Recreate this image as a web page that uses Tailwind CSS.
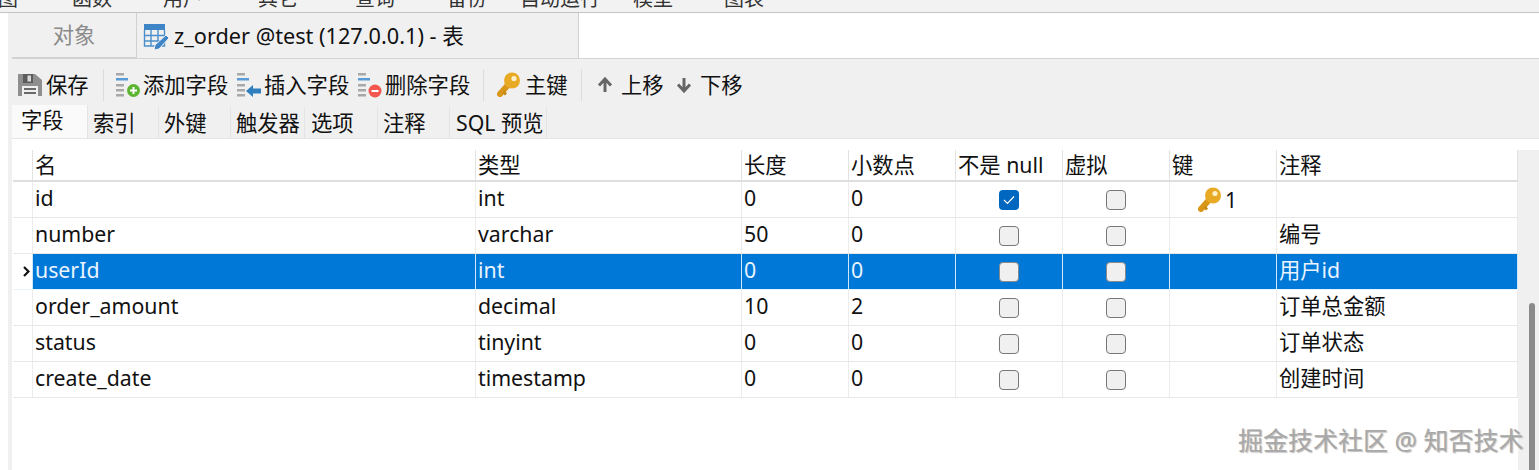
<!DOCTYPE html>
<html lang="zh-CN">
<head>
  <meta charset="UTF-8">
  <title>z_order @test (127.0.0.1) - 表</title>
  <script src="https://cdn.jsdelivr.net/npm/@tailwindcss/browser@4"></script>
</head>
<body class="relative w-[1539px] h-[470px] overflow-hidden bg-white text-[21.3px] text-[#111] font-['Noto_Sans','Noto_Sans_CJK_SC',sans-serif]">

  <!-- cut off menu bar -->
  <div class="h-[13px] overflow-hidden bg-[#f2f2f2] border-b border-[#c4c4c4] flex text-[20px] leading-[20px] text-[#333]">
    <div class="flex -mt-[11px] -ml-[2px]">
      <span class="w-[74px]">图</span>
      <span class="w-[91px]">函数</span>
      <span class="w-[95px]">用户</span>
      <span class="w-[97px]">其它</span>
      <span class="w-[92px]">查询</span>
      <span class="w-[73px]">备份</span>
      <span class="w-[113px]">自动运行</span>
      <span class="w-[91px]">模型</span>
      <span>图表</span>
    </div>
  </div>

  <div class="flex flex-col h-[457px] overflow-hidden pl-[4px] border-l-[8px] border-white bg-[#f0f0f0]">

    <!-- document tabs -->
    <div class="flex shrink-0 h-[46px] bg-white border-b border-[#d4d4d4]">
      <div class="w-[125px] flex items-center justify-center text-[#8a8a8a] bg-[#f0f0f0] border-r border-b border-[#d0d0d0]">对象</div>
      <div class="w-[442px] flex items-center pl-[6px] pt-[1px] gap-[5px] bg-[#f0f0f0] border-r border-[#d0d0d0] text-[21.7px]">
        <svg width="26" height="28" viewBox="0 0 26 28" class="shrink-0">
          <rect x="1" y="2" width="21" height="6" fill="#3d85c6"/>
          <path d="M1.500 8v16h20V8M8 8v16M15 8v16M1.500 13.500h20M1.500 19h20" fill="none" stroke="#4a8fcb" stroke-width="1.400"/>
          <path d="M12 23l11-10 3 3-10 11-5 1z" fill="#3d85c6" stroke="#f0f0f0" stroke-width="1"/>
        </svg>
        <span class="whitespace-nowrap">z_order @test (127.0.0.1) - 表</span>
      </div>
    </div>

    <!-- toolbar -->
    <div class="flex items-center shrink-0 h-[48px] pt-[3px] pl-[6px]">
      <div class="flex items-center w-[85px] gap-[4px]">
        <svg width="24" height="24" viewBox="0 0 24 24" class="shrink-0">
          <path d="M0 1h17l7 6v16H0z" fill="#8f8f8f"/>
          <rect x="5" y="1" width="10" height="9" fill="#5c5c5c"/>
          <rect x="9.500" y="2.500" width="3.500" height="6" fill="#d8d8d8"/>
          <rect x="4" y="13" width="16" height="10" fill="#f0f0f0"/>
          <path d="M6 16h12M6 20h12" stroke="#6a6a6a" stroke-width="2"/>
        </svg>
        <span>保存</span>
      </div>
      <div class="w-px h-[32px] bg-[#dcdcdc]"></div>
      <div class="flex items-center ml-[11px] w-[121px]">
        <svg width="28" height="28" viewBox="0 0 28 28" class="shrink-0">
          <path d="M1 2h8v2.500H1z" fill="#a8a8a8"/><path d="M1 7h12v2.500H1z" fill="#5b9bd5"/>
          <path d="M1 13h8v2.500H1zM1 18h8v2.500H1zM1 23h8v2.500H1z" fill="#a8a8a8"/>
          <circle cx="18.500" cy="19.500" r="6.500" fill="#5cb531"/>
          <path d="M15 19.500h7M18.500 16v7" stroke="#fff" stroke-width="2"/>
        </svg>
        <span>添加字段</span>
      </div>
      <div class="flex items-center w-[121px]">
        <svg width="28" height="28" viewBox="0 0 28 28" class="shrink-0">
          <path d="M1 2h8v2.500H1z" fill="#a8a8a8"/><path d="M1 7h12v2.500H1z" fill="#5b9bd5"/>
          <path d="M1 13h8v2.500H1zM1 18h8v2.500H1zM1 23h8v2.500H1z" fill="#a8a8a8"/>
          <path d="M10 20l7-6v3.500h8v5h-8V26z" fill="#2f7fbf"/>
        </svg>
        <span>插入字段</span>
      </div>
      <div class="flex items-center w-[116px]">
        <svg width="28" height="28" viewBox="0 0 28 28" class="shrink-0">
          <path d="M1 2h8v2.500H1z" fill="#a8a8a8"/><path d="M1 7h12v2.500H1z" fill="#5b9bd5"/>
          <path d="M1 13h8v2.500H1zM1 18h8v2.500H1zM1 23h8v2.500H1z" fill="#a8a8a8"/>
          <circle cx="18" cy="20" r="6.500" fill="#f2564f"/>
          <path d="M14.500 20h7" stroke="#fff" stroke-width="2"/>
        </svg>
        <span>删除字段</span>
      </div>
      <div class="w-px h-[32px] bg-[#dcdcdc] ml-[10px]"></div>
      <div class="flex items-center ml-[13px] w-[84px] gap-[4px]">
        <svg width="24" height="25" viewBox="0 0 24 25" class="shrink-0">
          <path d="M11 13L3 22" stroke="#d9971a" stroke-width="6" stroke-linecap="round"/>
          <path d="M6.500 20l2.500 2.500" stroke="#c98a12" stroke-width="3"/>
          <circle cx="15" cy="8.500" r="8" fill="#e8aa24"/>
          <circle cx="17" cy="6.500" r="2.600" fill="#fdf0c8"/>
        </svg>
        <span>主键</span>
      </div>
      <div class="w-px h-[32px] bg-[#dcdcdc]"></div>
      <div class="flex items-center ml-[15px] w-[79px] gap-[8px]">
        <svg width="16" height="16" viewBox="0 0 16 16" class="shrink-0">
          <path d="M8 15V3M2 8.500L8 2l6 6.500" fill="none" stroke="#666" stroke-width="3"/>
        </svg>
        <span>上移</span>
      </div>
      <div class="flex items-center gap-[8px]">
        <svg width="16" height="16" viewBox="0 0 16 16" class="shrink-0">
          <path d="M8 1v12M2 7.500L8 14l6-6.500" fill="none" stroke="#666" stroke-width="3"/>
        </svg>
        <span>下移</span>
      </div>
    </div>

    <!-- field / index / ... tabs -->
    <div class="flex shrink-0 h-[32px] border-b border-[#e4e4e4]">
      <div class="w-[76px] -mt-[2px] pl-[9px] pb-[3px] flex items-center bg-[#fafafa] border-r border-[#e4e4e4]">字段</div>
      <div class="w-[71px] pl-[5px] flex items-center border-r border-[#e4e4e4]">索引</div>
      <div class="w-[72px] pl-[5px] flex items-center border-r border-[#e4e4e4]">外键</div>
      <div class="w-[74px] pl-[5px] flex items-center border-r border-[#e4e4e4]">触发器</div>
      <div class="w-[73px] pl-[6px] flex items-center border-r border-[#e4e4e4]">选项</div>
      <div class="w-[72px] pl-[5px] flex items-center border-r border-[#e4e4e4]">注释</div>
      <div class="w-[97px] pl-[6px] flex items-center border-r border-[#e4e4e4] whitespace-nowrap">SQL 预览</div>
    </div>

    <!-- field grid -->
    <div class="flex-1 flex bg-white pt-[11px] pl-[1px] min-h-0">
      <div class="w-[1505px] shrink-0">
        <div class="grid grid-cols-[20px_443px_266px_107px_107px_107px_107px_107px_241px] h-[32px] border-b-2 border-[#dedede] leading-[30px] [&>div]:border-r [&>div]:border-[#e2e2e2] [&>div]:pl-[2px] [&>div]:whitespace-nowrap">
          <div></div><div>名</div><div>类型</div><div>长度</div><div>小数点</div><div>不是 null</div><div>虚拟</div><div>键</div><div class="border-r-0">注释</div>
        </div>

        <div class="grid grid-cols-[20px_443px_266px_107px_107px_107px_107px_107px_241px] h-[36px] border-b border-[#e8e8e8] leading-[32px] [&>div]:border-r [&>div]:border-[#ececec] [&>div]:pl-[2px]">
          <div></div><div>id</div><div>int</div><div>0</div><div>0</div>
          <div class="flex items-center justify-center !pl-0"><span class="w-[20px] h-[20px] rounded-[4px] bg-[#0067c0] flex items-center justify-center"><svg width="12" height="10" viewBox="0 0 12 10"><path d="M1 5l3.500 3.500L11 1.500" fill="none" stroke="#fff" stroke-width="1.200"/></svg></span></div>
          <div class="flex items-center justify-center !pl-0"><span class="w-[20px] h-[20px] rounded-[4px] bg-[#f0f0f0] border border-[#777]"></span></div>
          <div class="flex items-center gap-[3px] !pl-[28px]">
            <svg width="24" height="25" viewBox="0 0 24 25" class="shrink-0">
              <path d="M11 13L3 22" stroke="#d9971a" stroke-width="6" stroke-linecap="round"/>
              <path d="M6.500 20l2.500 2.500" stroke="#c98a12" stroke-width="3"/>
              <circle cx="15" cy="8.500" r="8" fill="#e8aa24"/>
              <circle cx="17" cy="6.500" r="2.600" fill="#fdf0c8"/>
            </svg>
            <span>1</span>
          </div>
          <div class="border-r-0"></div>
        </div>

        <div class="grid grid-cols-[20px_443px_266px_107px_107px_107px_107px_107px_241px] h-[36px] border-b border-[#e8e8e8] leading-[32px] [&>div]:border-r [&>div]:border-[#ececec] [&>div]:pl-[2px]">
          <div></div><div>number</div><div>varchar</div><div>50</div><div>0</div>
          <div class="flex items-center justify-center !pl-0"><span class="w-[20px] h-[20px] rounded-[4px] bg-[#f0f0f0] border border-[#777]"></span></div>
          <div class="flex items-center justify-center !pl-0"><span class="w-[20px] h-[20px] rounded-[4px] bg-[#f0f0f0] border border-[#777]"></span></div>
          <div></div><div class="border-r-0">编号</div>
        </div>

        <!-- selected row -->
        <div class="grid grid-cols-[20px_443px_266px_107px_107px_107px_107px_107px_241px] h-[36px] border-b border-[#e8f4fc] leading-[32px] text-[#eaf4ff] [&>div]:border-r [&>div]:border-[#cfe6f7] [&>div]:pl-[2px]">
          <div class="flex items-center bg-white !pl-[10px]"><svg width="7" height="11" viewBox="0 0 7 11"><path d="M1 1l4.500 4.500L1 10" fill="none" stroke="#111" stroke-width="2.200"/></svg></div>
          <div class="bg-[#0078d7]">userId</div><div class="bg-[#0078d7]">int</div><div class="bg-[#0078d7]">0</div><div class="bg-[#0078d7]">0</div>
          <div class="flex items-center justify-center bg-[#0078d7] !pl-0"><span class="w-[20px] h-[20px] rounded-[4px] bg-[#f0f0f0] border border-[#8a8a8a]"></span></div>
          <div class="flex items-center justify-center bg-[#0078d7] !pl-0"><span class="w-[20px] h-[20px] rounded-[4px] bg-[#f0f0f0] border border-[#8a8a8a]"></span></div>
          <div class="bg-[#0078d7]"></div><div class="bg-[#0078d7] border-r-0">用户id</div>
        </div>

        <div class="grid grid-cols-[20px_443px_266px_107px_107px_107px_107px_107px_241px] h-[36px] border-b border-[#e8e8e8] leading-[32px] [&>div]:border-r [&>div]:border-[#ececec] [&>div]:pl-[2px]">
          <div></div><div>order_amount</div><div>decimal</div><div>10</div><div>2</div>
          <div class="flex items-center justify-center !pl-0"><span class="w-[20px] h-[20px] rounded-[4px] bg-[#f0f0f0] border border-[#777]"></span></div>
          <div class="flex items-center justify-center !pl-0"><span class="w-[20px] h-[20px] rounded-[4px] bg-[#f0f0f0] border border-[#777]"></span></div>
          <div></div><div class="border-r-0">订单总金额</div>
        </div>

        <div class="grid grid-cols-[20px_443px_266px_107px_107px_107px_107px_107px_241px] h-[36px] border-b border-[#e8e8e8] leading-[32px] [&>div]:border-r [&>div]:border-[#ececec] [&>div]:pl-[2px]">
          <div></div><div>status</div><div>tinyint</div><div>0</div><div>0</div>
          <div class="flex items-center justify-center !pl-0"><span class="w-[20px] h-[20px] rounded-[4px] bg-[#f0f0f0] border border-[#777]"></span></div>
          <div class="flex items-center justify-center !pl-0"><span class="w-[20px] h-[20px] rounded-[4px] bg-[#f0f0f0] border border-[#777]"></span></div>
          <div></div><div class="border-r-0">订单状态</div>
        </div>

        <div class="grid grid-cols-[20px_443px_266px_107px_107px_107px_107px_107px_241px] h-[36px] border-b border-[#e8e8e8] leading-[32px] [&>div]:border-r [&>div]:border-[#ececec] [&>div]:pl-[2px]">
          <div></div><div>create_date</div><div>timestamp</div><div>0</div><div>0</div>
          <div class="flex items-center justify-center !pl-0"><span class="w-[20px] h-[20px] rounded-[4px] bg-[#f0f0f0] border border-[#777]"></span></div>
          <div class="flex items-center justify-center !pl-0"><span class="w-[20px] h-[20px] rounded-[4px] bg-[#f0f0f0] border border-[#777]"></span></div>
          <div></div><div class="border-r-0">创建时间</div>
        </div>
      </div>

      <!-- scrollbar -->
      <div class="w-[21px] ml-auto bg-[#f0f0f0] pt-[153px] pl-[11px]">
        <div class="w-[6px] h-[167px] rounded-t-[3px] bg-[#8a8a8a]"></div>
      </div>
    </div>
  </div>

  <!-- watermark -->
  <div class="absolute left-[1238px] top-[425px] text-[25px] leading-[30px] text-[#a8a8a8] whitespace-nowrap [text-shadow:1px_1px_1px_rgba(110,110,110,0.45)]">掘金技术社区 @ 知否技术</div>
</body>
</html>
